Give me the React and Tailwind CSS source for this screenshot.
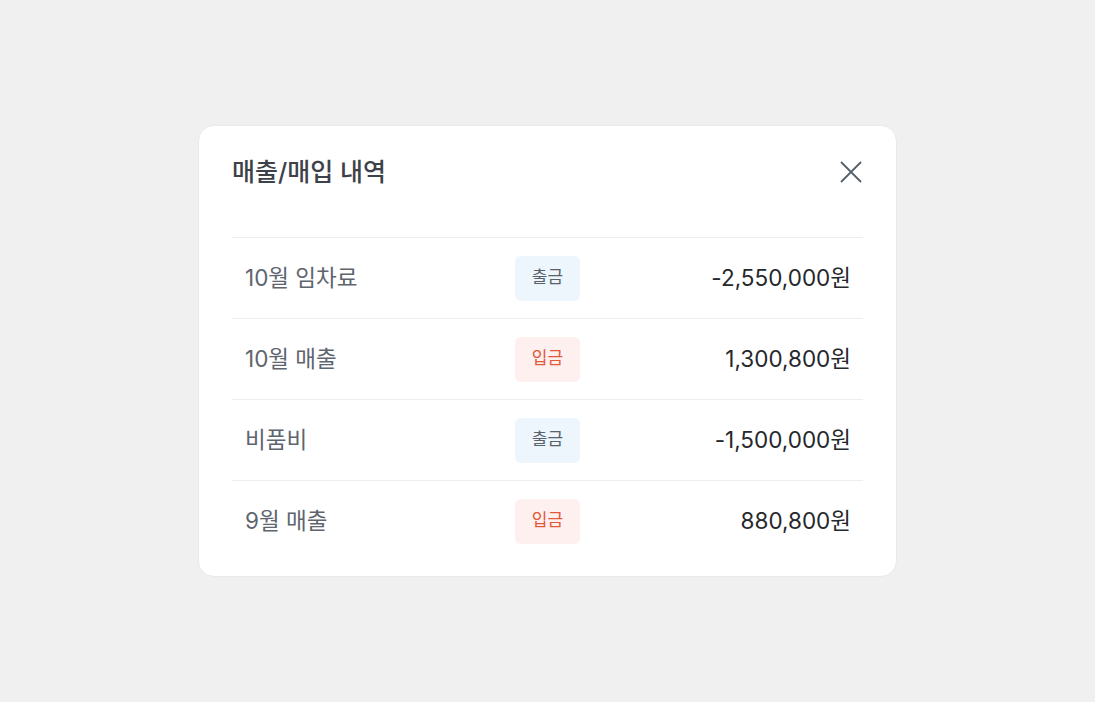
import React from 'react';

const rows = [
  { label: '10월 임차료', type: 'out', amount: '-2,550,000원' },
  { label: '10월 매출', type: 'in', amount: '1,300,800원' },
  { label: '비품비', type: 'out', amount: '-1,500,000원' },
  { label: '9월 매출', type: 'in', amount: '880,800원' },
];

function Badge({ type }) {
  if (type === 'in') {
    return (
      <span className="flex h-[45px] w-[65px] items-center justify-center rounded-md bg-[#fdf0ee] text-[17px] text-[#e2583b]">
        입금
      </span>
    );
  }
  return (
    <span className="flex h-[45px] w-[65px] items-center justify-center rounded-md bg-[#edf5fd] text-[17px] text-[#59616b]">
      출금
    </span>
  );
}

export default function App() {
  return (
    <div
      className="flex min-h-screen items-start justify-center bg-[#eff0ef] pt-[125px]"
      style={{ fontFamily: 'Inter, "Noto Sans CJK KR", sans-serif' }}
    >
      <div className="w-[699px] rounded-2xl border border-[#e8eaea] bg-white px-[33px] pb-[15px]">
        {/* Header */}
        <div className="flex h-[111px] items-start justify-between pt-[28px]">
          <h2 className="text-[25px] font-medium leading-[36px] text-[#3d4249]">매출/매입 내역</h2>
          <button className="mr-[1px] mt-[7px] text-[#56606a]">
            <svg width="22" height="22" viewBox="0 0 22 22" fill="none" stroke="currentColor" strokeWidth="1.8">
              <path d="M1 1L21 21M21 1L1 21" />
            </svg>
          </button>
        </div>

        {/* Rows */}
        <div>
          {rows.map((r, i) => (
            <div
              key={i}
              className="grid h-[81px] grid-cols-[283px_65px_1fr] items-center border-t border-[#eeeeee]"
            >
              <span className="pl-[13px] text-[22.5px] text-[#5e656e]">{r.label}</span>
              <Badge type={r.type} />
              <span className="pr-[12px] text-right text-[22.5px] text-[#25282c]">{r.amount}</span>
            </div>
          ))}
        </div>
      </div>
    </div>
  );
}
